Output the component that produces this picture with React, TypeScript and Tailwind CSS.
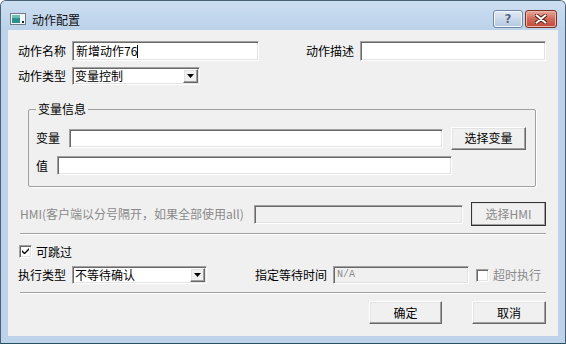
import React from "react";

const sunken =
  "border border-t-[#a0a0a0] border-l-[#a0a0a0] border-b-[#ffffff] border-r-[#ffffff] shadow-[inset_1px_1px_0_#696969,inset_-1px_-1px_0_#e3e3e3]";
const raised =
  "border border-t-[#ffffff] border-l-[#ffffff] border-b-[#696969] border-r-[#696969] shadow-[inset_-1px_-1px_0_#a0a0a0,inset_1px_1px_0_#e3e3e3] bg-[#f0f0f0]";

function Combo({ value, width }: { value: string; width: string }) {
  return (
    <div className={`${sunken} ${width} h-[18px] bg-white flex items-center justify-between pl-[2px] pr-[1px]`}>
      <span className="leading-none">{value}</span>
      <span className={`${raised} w-[15px] h-[14px] flex items-center justify-center`}>
        <svg width="7" height="4" viewBox="0 0 7 4">
          <path d="M0 0h7L3.5 4z" fill="#000" />
        </svg>
      </span>
    </div>
  );
}

function CheckBox({ checked }: { checked?: boolean }) {
  return (
    <span className={`${sunken} w-[13px] h-[13px] bg-white flex items-center justify-center shrink-0`}>
      {checked && (
        <svg width="7" height="7" viewBox="0 0 7 7">
          <path d="M0 2v2l2 2h1l4-4V0L2.5 4.5z" fill="#000" />
        </svg>
      )}
    </span>
  );
}

function Btn({ label, width, height, className = "" }: { label: React.ReactNode; width: string; height: string; className?: string }) {
  return (
    <button className={`${raised} ${width} ${height} flex items-center justify-center leading-none ${className}`}>
      {label}
    </button>
  );
}

export default function App() {
  return (
    <div className="w-[566px] h-[344px] flex flex-col rounded-t-[6px] border border-[#4a6077] border-b-[#24505f] bg-[#bed3ea] font-['Noto_Sans_CJK_SC',sans-serif] text-[12px] text-black overflow-hidden">
      {/* Title bar */}
      <div className="h-[29px] shrink-0 flex items-start bg-gradient-to-b from-[#ccdef1] to-[#bbd2ea] pt-[9px] pl-[9px] pr-[8px]">
        <svg width="16" height="12" viewBox="0 0 16 12" className="mt-[3px]">
          <rect x="0.5" y="0.5" width="15" height="11" fill="#f4f6f8" stroke="#6f7b86" />
          <rect x="2" y="2" width="8" height="8" fill="#2f8f8a" />
          <rect x="2" y="2" width="8" height="3" fill="#6dbfb5" />
          <rect x="12" y="8" width="2" height="2" fill="#222" />
        </svg>
        <span className="ml-[6px] mt-[2px] leading-[16px] text-[#111]">动作配置</span>
        <div className="flex-1" />
        <div className="flex gap-[2px]">
          <div className="w-[30px] h-[18px] rounded-[3px] border border-[#7189a6] bg-gradient-to-b from-[#e4edf7] via-[#c9d8ea] to-[#b3c7de] flex items-center justify-center shadow-[inset_0_0_0_1px_#f2f6fb]">
            <span className="font-['DejaVu_Sans',sans-serif] font-bold text-[12px] leading-none text-[#4f6680] [text-shadow:0_0_1px_#fff]">?</span>
          </div>
          <div className="w-[32px] h-[18px] rounded-[3px] border border-[#7b3126] bg-gradient-to-b from-[#e7a99b] via-[#d06a58] to-[#c2473a] flex items-center justify-center shadow-[inset_0_0_0_1px_#eab7aa]">
            <svg width="12" height="10" viewBox="0 0 12 10">
              <path d="M1 1l10 8M11 1L1 9" stroke="#5a2018" strokeWidth="4" strokeLinecap="round" />
              <path d="M1.5 1.3l9 7.4M10.5 1.3l-9 7.4" stroke="#fff" strokeWidth="2" strokeLinecap="round" />
            </svg>
          </div>
        </div>
      </div>

      {/* Client area */}
      <div className="flex-1 px-[7px] pb-[7px]">
        <div className="h-full bg-[#f0f0f0] flex flex-col">
          {/* Row 1 */}
          <div className="mt-[11px] h-[20px] flex items-center">
            <span className="ml-[10px] w-[54px] leading-none">动作名称</span>
            <div className={`${sunken} w-[187px] h-[20px] bg-white flex items-center pl-[3px]`}>
              <span className="leading-none">新增动作76</span>
              <span className="w-px h-[13px] bg-black" />
            </div>
            <div className="flex-1" />
            <span className="leading-none">动作描述</span>
            <div className={`${sunken} ml-[6px] mr-[12px] w-[186px] h-[20px] bg-white`} />
          </div>

          {/* Row 2 */}
          <div className="mt-[6px] h-[18px] flex items-center">
            <span className="ml-[10px] w-[54px] leading-none">动作类型</span>
            <Combo value="变量控制" width="w-[128px]" />
          </div>

          {/* Group box */}
          <fieldset className="mt-[16px] ml-[20px] w-[508px] border border-[#a0a0a0] rounded-[2px] shadow-[1px_1px_0_#fff] pl-[7px] pb-[11px]">
            <legend className="px-[2px] leading-[16px]">变量信息</legend>
            <div className="mt-[9px] h-[24px] flex items-center">
              <span className="w-[33px] leading-none">变量</span>
              <div className={`${sunken} w-[374px] h-[19px] bg-white`} />
              <Btn label="选择变量" width="w-[75px]" height="h-[23px]" className="ml-[8px]" />
            </div>
            <div className="mt-[6px] h-[19px] flex items-center">
              <span className="w-[21px] leading-none">值</span>
              <div className={`${sunken} w-[395px] h-[19px] bg-white`} />
            </div>
          </fieldset>

          {/* HMI row */}
          <div className="mt-[15px] h-[24px] flex items-center">
            <span className="ml-[12px] w-[234px] leading-none text-[#8a8a8a] whitespace-nowrap">
              HMI(客户端以分号隔开，如果全部使用all)
            </span>
            <div className={`${sunken} w-[209px] h-[19px] bg-[#f0f0f0]`} />
            <Btn
              label={<span className="text-[#8a8a8a]">选择HMI</span>}
              width="w-[75px]"
              height="h-[24px]"
              className="ml-[8px] outline outline-1 outline-[#333] -outline-offset-1"
            />
          </div>

          {/* Separator */}
          <div className="mt-[7px] mx-[12px] h-[2px] border-t border-t-[#a0a0a0] border-b border-b-white" />

          {/* Checkbox row */}
          <div className="mt-[10px] h-[13px] flex items-center">
            <span className="ml-[11px]">
              <CheckBox checked />
            </span>
            <span className="ml-[4px] leading-none">可跳过</span>
          </div>

          {/* Exec row */}
          <div className="mt-[8px] h-[18px] flex items-center">
            <span className="ml-[10px] w-[54px] leading-none">执行类型</span>
            <Combo value="不等待确认" width="w-[135px]" />
            <span className="ml-[48px] leading-none">指定等待时间</span>
            <div className={`${sunken} ml-[6px] w-[136px] h-[18px] bg-[#f0f0f0] flex items-center pl-[3px]`}>
              <span className="leading-none text-[#8a8a8a] font-['Liberation_Mono',monospace] text-[10px]">N/A</span>
            </div>
            <span className="ml-[7px]">
              <CheckBox />
            </span>
            <span className="ml-[4px] leading-none text-[#8a8a8a]">超时执行</span>
          </div>

          {/* Separator */}
          <div className="mt-[8px] mx-[12px] h-[2px] border-t border-t-[#a0a0a0] border-b border-b-white" />

          {/* Buttons */}
          <div className="mt-[7px] h-[23px] flex justify-end pr-[12px] gap-[30px]">
            <Btn label="确定" width="w-[73px]" height="h-[23px]" />
            <Btn label="取消" width="w-[74px]" height="h-[23px]" />
          </div>
        </div>
      </div>
    </div>
  );
}
